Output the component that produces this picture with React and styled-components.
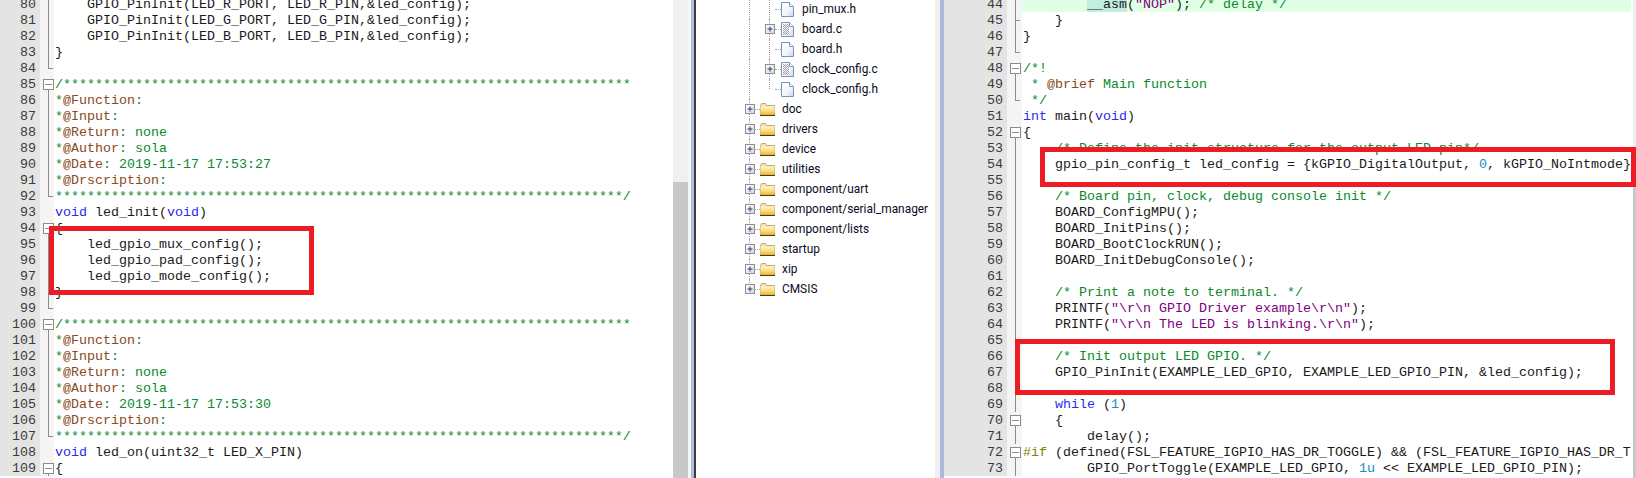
import React from 'react';
import styled, { createGlobalStyle } from 'styled-components';

const GlobalStyle = createGlobalStyle`
	html, body {
		margin: 0;
		height: 478px;
		overflow: hidden;
		background: #fff;
	}
`;

const Page = styled.div`
	display: flex;
	width: 1636px;
	height: 478px;
	overflow: hidden;
`;

const EditorPane = styled.div`
	position: relative;
	display: flex;
	flex: none;
	width: ${(p) => p.$width}px;
	height: 478px;
	overflow: hidden;
`;

const Editor = styled.div`
	--num: ${(p) => p.$num}px;
	--fold: ${(p) => p.$fold}px;
	--stem: ${(p) => p.$stem}px;
	flex: 1;
	min-width: 0;
	margin-top: -4px;
	font-family: 'Liberation Mono', 'Courier New', monospace;
	font-size: 13.33px;
	color: #1a1a1a;
`;

const Row = styled.div`
	display: flex;
	height: 16px;
	line-height: 18px;
`;

const LineNo = styled.div`
	flex: none;
	width: var(--num);
	padding-right: 4px;
	box-sizing: border-box;
	text-align: right;
	background: #e4e4e4;
	color: #3a3a3a;
`;

const Fold = styled.div`
	position: relative;
	flex: none;
	width: var(--fold);
	background: repeating-conic-gradient(#efefef 0 25%, #fafafa 0 50%) 0 0 / 2px 2px;

	&::before {
		content: '';
		display: ${(p) => (p.$kind === 'none' ? 'none' : 'block')};
		position: absolute;
		left: var(--stem);
		top: ${(p) => (p.$kind === 'box' ? '8px' : '0')};
		height: ${(p) => (p.$kind === 'end' ? '8px' : p.$kind === 'box' ? '8px' : '16px')};
		border-left: 1px solid #8c8c8c;
	}

	&::after {
		content: '';
		display: ${(p) => (p.$kind === 'end' || p.$kind === 'tee' ? 'block' : 'none')};
		position: absolute;
		left: var(--stem);
		top: 8px;
		width: 5px;
		border-top: 1px solid #8c8c8c;
	}
`;

const FoldBox = styled.span`
	position: absolute;
	z-index: 1;
	left: calc(var(--stem) - 5px);
	top: 3px;
	width: 11px;
	height: 11px;
	box-sizing: border-box;
	border: 1px solid #8c8c8c;
	background: #fff;

	&::after {
		content: '';
		position: absolute;
		left: 1px;
		right: 1px;
		top: 4px;
		border-top: 1px solid #8c8c8c;
	}
`;

const Code = styled.pre`
	flex: none;
	width: ${(p) => p.$width}px;
	margin: 0;
	padding-left: 1px;
	box-sizing: border-box;
	overflow-x: clip;
	font: inherit;
	background: ${(p) => (p.$active ? '#e0ffe5' : 'transparent')};
`;

const tokenColors = {
	kw: '#2a2af0',
	str: '#800080',
	num: '#1a8cc0',
	cm: '#0a8a2a',
	tag: '#8a4a20',
	pre: '#808000',
};

const Token = styled.span`
	color: ${(p) => tokenColors[p.$kind] || 'inherit'};
	background: ${(p) => (p.$kind === 'mark' ? '#c2eee0' : 'transparent')};
`;

const Scrollbar = styled.div`
	display: flex;
	flex: none;
	width: ${(p) => p.$width}px;
	padding-top: ${(p) => p.$thumbTop}px;
	box-sizing: border-box;
	background: #f0f0f0;
`;

const Thumb = styled.div`
	flex: 1;
	background: #c8c8c8;
`;

const Splitter = styled.div`
	flex: none;
	width: ${(p) => p.$width}px;
	background: ${(p) => p.$bg};
`;

const TreePane = styled.div`
	flex: none;
	width: 239px;
	height: 478px;
	margin-top: -1px;
	box-sizing: border-box;
	background: #fff;
	font-family: Roboto, 'Open Sans', sans-serif;
	font-size: 11.9px;
	color: #0a0a1e;
`;

const TreeRow = styled.div`
	position: relative;
	display: flex;
	align-items: center;
	height: 20px;
	padding-left: ${(p) => (p.$file ? 69 : 49)}px;

	/* the dotted guide of the folder level */
	&::before {
		content: '';
		position: absolute;
		left: 53px;
		top: 0;
		height: ${(p) => (p.$lastFolder ? '10px' : '20px')};
		border-left: 1px dotted #a0a0a0;
	}

	/* the dotted guide of the file level */
	&::after {
		content: '';
		display: ${(p) => (p.$file ? 'block' : 'none')};
		position: absolute;
		left: 73px;
		top: 0;
		height: ${(p) => (p.$lastFile ? '10px' : '20px')};
		border-left: 1px dotted #a0a0a0;
	}
`;

const Expander = styled.svg`
	position: relative;
	z-index: 1;
	flex: none;
	width: 10px;
	height: 10px;
	visibility: ${(p) => (p.$hidden ? 'hidden' : 'visible')};
`;

const Dash = styled.span`
	flex: none;
	width: ${(p) => p.$width}px;
	border-top: 1px dotted #a0a0a0;
`;

const TreeLabel = styled.span`
	margin-left: ${(p) => p.$gap}px;
	white-space: nowrap;
`;

const FileGlyph = styled.svg`
	flex: none;
	width: 13px;
	height: 15px;
`;

const FolderGlyph = styled.svg`
	flex: none;
	width: 15px;
	height: 13px;
`;

const RedBox = styled.div`
	position: absolute;
	z-index: 2;
	left: ${(p) => p.$left}px;
	top: ${(p) => p.$top}px;
	width: ${(p) => p.$width}px;
	height: ${(p) => p.$height}px;
	box-sizing: border-box;
	border: 5px solid #ed1c24;
`;

const c = (text) => ['cm', text];
const k = (text) => ['kw', text];
const s = (text) => ['str', text];
const n = (text) => ['num', text];
const t = (text) => ['tag', text];
const stars = '*'.repeat(71);

const docBlock = (date) => [
	[c('/' + stars)],
	[c('*'), t('@Function'), c(':')],
	[c('*'), t('@Input'), c(':')],
	[c('*'), t('@Return'), c(': none')],
	[c('*'), t('@Author'), c(': sola')],
	[c('*'), t('@Date'), c(': ' + date)],
	[c('*'), t('@Drscription'), c(':')],
	[c(stars + '/')],
];

const leftLines = [
	['line', '    GPIO_PinInit(LED_R_PORT, LED_R_PIN,&led_config);'],
	['line', '    GPIO_PinInit(LED_G_PORT, LED_G_PIN,&led_config);'],
	['line', '    GPIO_PinInit(LED_B_PORT, LED_B_PIN,&led_config);'],
	['line', '}'],
	['end', ''],
	...docBlock('2019-11-17 17:53:27').map((parts, i) => [i === 0 ? 'box' : i === 7 ? 'end' : 'line', parts]),
	['none', [k('void'), ' led_init(', k('void'), ')']],
	['box', '{'],
	['line', '    led_gpio_mux_config();'],
	['line', '    led_gpio_pad_config();'],
	['line', '    led_gpio_mode_config();'],
	['line', '}'],
	['end', ''],
	...docBlock('2019-11-17 17:53:30').map((parts, i) => [i === 0 ? 'box' : i === 7 ? 'end' : 'line', parts]),
	['none', [k('void'), ' led_on(uint32_t LED_X_PIN)']],
	['box', '{'],
];

const rightLines = [
	['line', ['        ', ['mark', '__asm'], '(', s('"NOP"'), '); ', c('/* delay */')]],
	['tee', '    }'],
	['line', '}'],
	['end', ''],
	['box', [c('/*!')]],
	['line', [c(' * '), t('@brief'), c(' Main function')]],
	['end', [c(' */')]],
	['none', [k('int'), ' main(', k('void'), ')']],
	['box', '{'],
	['line', ['    ', c('/* Define the init structure for the output LED pin*/')]],
	['line', ['    gpio_pin_config_t led_config = {kGPIO_DigitalOutput, ', n('0'), ', kGPIO_NoIntmode};']],
	['line', ''],
	['line', ['    ', c('/* Board pin, clock, debug console init */')]],
	['line', '    BOARD_ConfigMPU();'],
	['line', '    BOARD_InitPins();'],
	['line', '    BOARD_BootClockRUN();'],
	['line', '    BOARD_InitDebugConsole();'],
	['line', ''],
	['line', ['    ', c('/* Print a note to terminal. */')]],
	['line', ['    PRINTF(', s('"\\r\\n GPIO Driver example\\r\\n"'), ');']],
	['line', ['    PRINTF(', s('"\\r\\n The LED is blinking.\\r\\n"'), ');']],
	['line', ''],
	['line', ['    ', c('/* Init output LED GPIO. */')]],
	['line', '    GPIO_PinInit(EXAMPLE_LED_GPIO, EXAMPLE_LED_GPIO_PIN, &led_config);'],
	['line', ''],
	['line', ['    ', k('while'), ' (', n('1'), ')']],
	['box', '    {'],
	['line', '        delay();'],
	['box', [['pre', '#if'], ' (defined(FSL_FEATURE_IGPIO_HAS_DR_TOGGLE) && (FSL_FEATURE_IGPIO_HAS_DR_TOGGLE == 1))']],
	['line', ['        GPIO_PortToggle(EXAMPLE_LED_GPIO, ', n('1u'), ' << EXAMPLE_LED_GPIO_PIN);']],
];

const treeFiles = [
	{ name: 'pin_mux.h' },
	{ name: 'board.c', source: true },
	{ name: 'board.h' },
	{ name: 'clock_config.c', source: true },
	{ name: 'clock_config.h' },
];

const treeFolders = [
	'doc',
	'drivers',
	'device',
	'utilities',
	'component/uart',
	'component/serial_manager',
	'component/lists',
	'startup',
	'xip',
	'CMSIS',
];

const PlusBox = ({ hidden }) => (
	<Expander $hidden={hidden} viewBox="0 0 10 10">
		<defs>
			<linearGradient id="plusFill" x1="0" y1="0" x2="1" y2="1">
				<stop offset="0" stopColor="#ffffff" />
				<stop offset="1" stopColor="#d8d8d8" />
			</linearGradient>
		</defs>
		<rect x="0.5" y="0.5" width="9" height="9" fill="url(#plusFill)" stroke="#8f8f8f" />
		<path d="M2.5 5h5M5 2.5v5" stroke="#2c3a78" strokeWidth="1" />
	</Expander>
);

const FileIcon = ({ source }) => (
	<FileGlyph viewBox="0 0 13 15">
		<defs>
			<linearGradient id="pageFill" x1="0" y1="0" x2="1" y2="1">
				<stop offset="0" stopColor="#ffffff" />
				<stop offset="0.6" stopColor="#f2f6fc" />
				<stop offset="1" stopColor="#c4d4ee" />
			</linearGradient>
			<pattern id="pageHatch" width="2" height="2" patternUnits="userSpaceOnUse">
				<rect width="2" height="2" fill="#f4f4f4" />
				<rect width="1" height="1" fill="#8a8a8a" />
				<rect x="1" y="1" width="1" height="1" fill="#8a8a8a" />
			</pattern>
		</defs>
		<path d="M0.5 0.5h8l4 4v10h-12z" fill="url(#pageFill)" stroke="#7f93b8" />
		<path d="M8.5 0.5v4h4" fill="#ffffff" stroke="#7f93b8" />
		{source && <rect x="2" y="2" width="6" height="11" fill="url(#pageHatch)" opacity="0.75" />}
	</FileGlyph>
);

const FolderIcon = () => (
	<FolderGlyph viewBox="0 0 15 13">
		<defs>
			<linearGradient id="folderFill" x1="0" y1="0" x2="0" y2="1">
				<stop offset="0" stopColor="#fff6cf" />
				<stop offset="0.55" stopColor="#fcd772" />
				<stop offset="1" stopColor="#e8a92c" />
			</linearGradient>
		</defs>
		<path d="M0.5 2.5l1-2h4l1 2h8v10h-14z" fill="#f4e3a8" stroke="#b09a62" strokeWidth="0.8" />
		<rect x="0.5" y="3.5" width="14" height="9" fill="url(#folderFill)" />
		<path d="M0 12.5h15" stroke="#4a3a10" />
	</FolderGlyph>
);

const Line = ({ number, fold, parts, codeWidth, active }) => {
	const items = typeof parts === 'string' ? [parts] : parts;
	return (
		<Row>
			<LineNo>{number}</LineNo>
			<Fold $kind={fold}>{fold === 'box' && <FoldBox />}</Fold>
			<Code $width={codeWidth} $active={active}>
				{items.map((part, i) =>
					typeof part === 'string' ? part : <Token key={i} $kind={part[0]}>{part[1]}</Token>
				)}
			</Code>
		</Row>
	);
};

const App = () => (
	<Page>
		<GlobalStyle />
		<EditorPane $width={688}>
			<Editor $num={40} $fold={14} $stem={8}>
				{leftLines.map(([fold, parts], i) => (
					<Line key={i} number={80 + i} fold={fold} parts={parts} codeWidth={619} />
				))}
			</Editor>
			<Scrollbar $width={15} $thumbTop={182}>
				<Thumb />
			</Scrollbar>
			<RedBox $left={49} $top={226} $width={265} $height={69} />
		</EditorPane>
		<Splitter $width={3} $bg="#f6f6f6" />
		<Splitter $width={3} $bg="#b0bcdc" />
		<Splitter $width={2} $bg="#3c3c3c" />
		<TreePane>
			{treeFiles.map((file, i) => (
				<TreeRow key={file.name} $file $lastFile={i === treeFiles.length - 1}>
					<PlusBox hidden={!file.source} />
					<Dash $width={6} />
					<FileIcon source={file.source} />
					<TreeLabel $gap={8}>{file.name}</TreeLabel>
				</TreeRow>
			))}
			{treeFolders.map((name, i) => (
				<TreeRow key={name} $lastFolder={i === treeFolders.length - 1}>
					<PlusBox />
					<Dash $width={5} />
					<FolderIcon />
					<TreeLabel $gap={7}>{name}</TreeLabel>
				</TreeRow>
			))}
		</TreePane>
		<Splitter $width={5} $bg="#f0f0f0" />
		<Splitter $width={4} $bg="#aebadc" />
		<EditorPane $width={692}>
			<Editor $num={63} $fold={15} $stem={8}>
				{rightLines.map(([fold, parts], i) => (
					<Line key={i} number={44 + i} fold={fold} parts={parts} codeWidth={609} active={i === 0} />
				))}
			</Editor>
			<Scrollbar $width={3} $thumbTop={187}>
				<Thumb />
			</Scrollbar>
			<RedBox $left={96} $top={147} $width={596} $height={40} />
			<RedBox $left={71} $top={339} $width={600} $height={56} />
		</EditorPane>
	</Page>
);

export default App;
